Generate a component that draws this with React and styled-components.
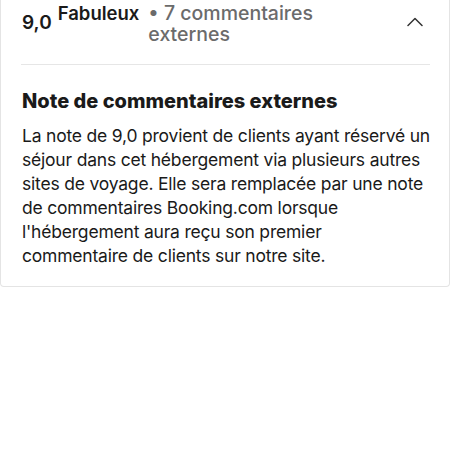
import React from "react";
import styled, { createGlobalStyle } from "styled-components";

const Global = createGlobalStyle`
  html, body { margin: 0; padding: 0; background: #ffffff; }
  body { font-family: Inter, "Noto Sans", sans-serif; color: #1a1a1a; -webkit-font-smoothing: antialiased; }
`;

const Card = styled.section`
  width: 450px;
  border: 1px solid #e4e4e4;
  border-top: none;
  border-radius: 0 0 4px 4px;
  padding: 0 19px 18px 20px;
  box-sizing: border-box;
  background: #fff;
`;

const Header = styled.div`
  display: flex;
  align-items: flex-start;
  padding: 2px 0 19px 1px;
  border-bottom: 1px solid #e6e6e6;
`;

const Score = styled.span`
  font-size: 19px;
  font-weight: 600;
  line-height: 22px;
  margin-top: 10px;
  margin-right: 6px;
  color: #1a1a1a;
`;

const Label = styled.span`
  font-size: 18.5px;
  font-weight: 600;
  line-height: 22px;
  color: #1a1a1a;
  margin-right: 9px;
`;

const Meta = styled.span`
  font-size: 19.5px;
  font-weight: 500;
  line-height: 21px;
  color: #6b6b6b;
  width: 195px;
  padding-top: 1px;
`;

const Toggle = styled.button`
  margin-left: auto;
  margin-top: 15px;
  margin-right: 7px;
  background: none;
  border: none;
  padding: 0;
  display: flex;
  color: #333;
`;

const Body = styled.div`
  padding: 24px 0 0 1px;
`;

const Title = styled.h3`
  margin: 0 0 11px 0;
  font-size: 20px;
  font-weight: 850;
  line-height: 24px;
  color: #1a1a1a;
`;

const Text = styled.p`
  margin: 0;
  font-size: 17.5px;
  letter-spacing: -0.2px;
  line-height: 24px;
  color: #1a1a1a;
`;

export default function App() {
  return (
    <>
      <Global />
      <Card>
        <Header>
          <Score>9,0</Score>
          <Label>Fabuleux</Label>
          <Meta>• 7 commentaires externes</Meta>
          <Toggle aria-label="Réduire">
            <svg width="16" height="10" viewBox="0 0 16 10" fill="none">
              <path d="M1 8.5 L8 1.5 L15 8.5" stroke="currentColor" strokeWidth="1.5" strokeLinecap="round" strokeLinejoin="round" />
            </svg>
          </Toggle>
        </Header>
        <Body>
          <Title>Note de commentaires externes</Title>
          <Text>
            La note de 9,0 provient de clients ayant réservé un séjour dans cet hébergement via plusieurs autres sites de voyage. Elle sera remplacée par une note de commentaires Booking.com lorsque l'hébergement aura reçu son premier commentaire de clients sur notre site.
          </Text>
        </Body>
      </Card>
    </>
  );
}
